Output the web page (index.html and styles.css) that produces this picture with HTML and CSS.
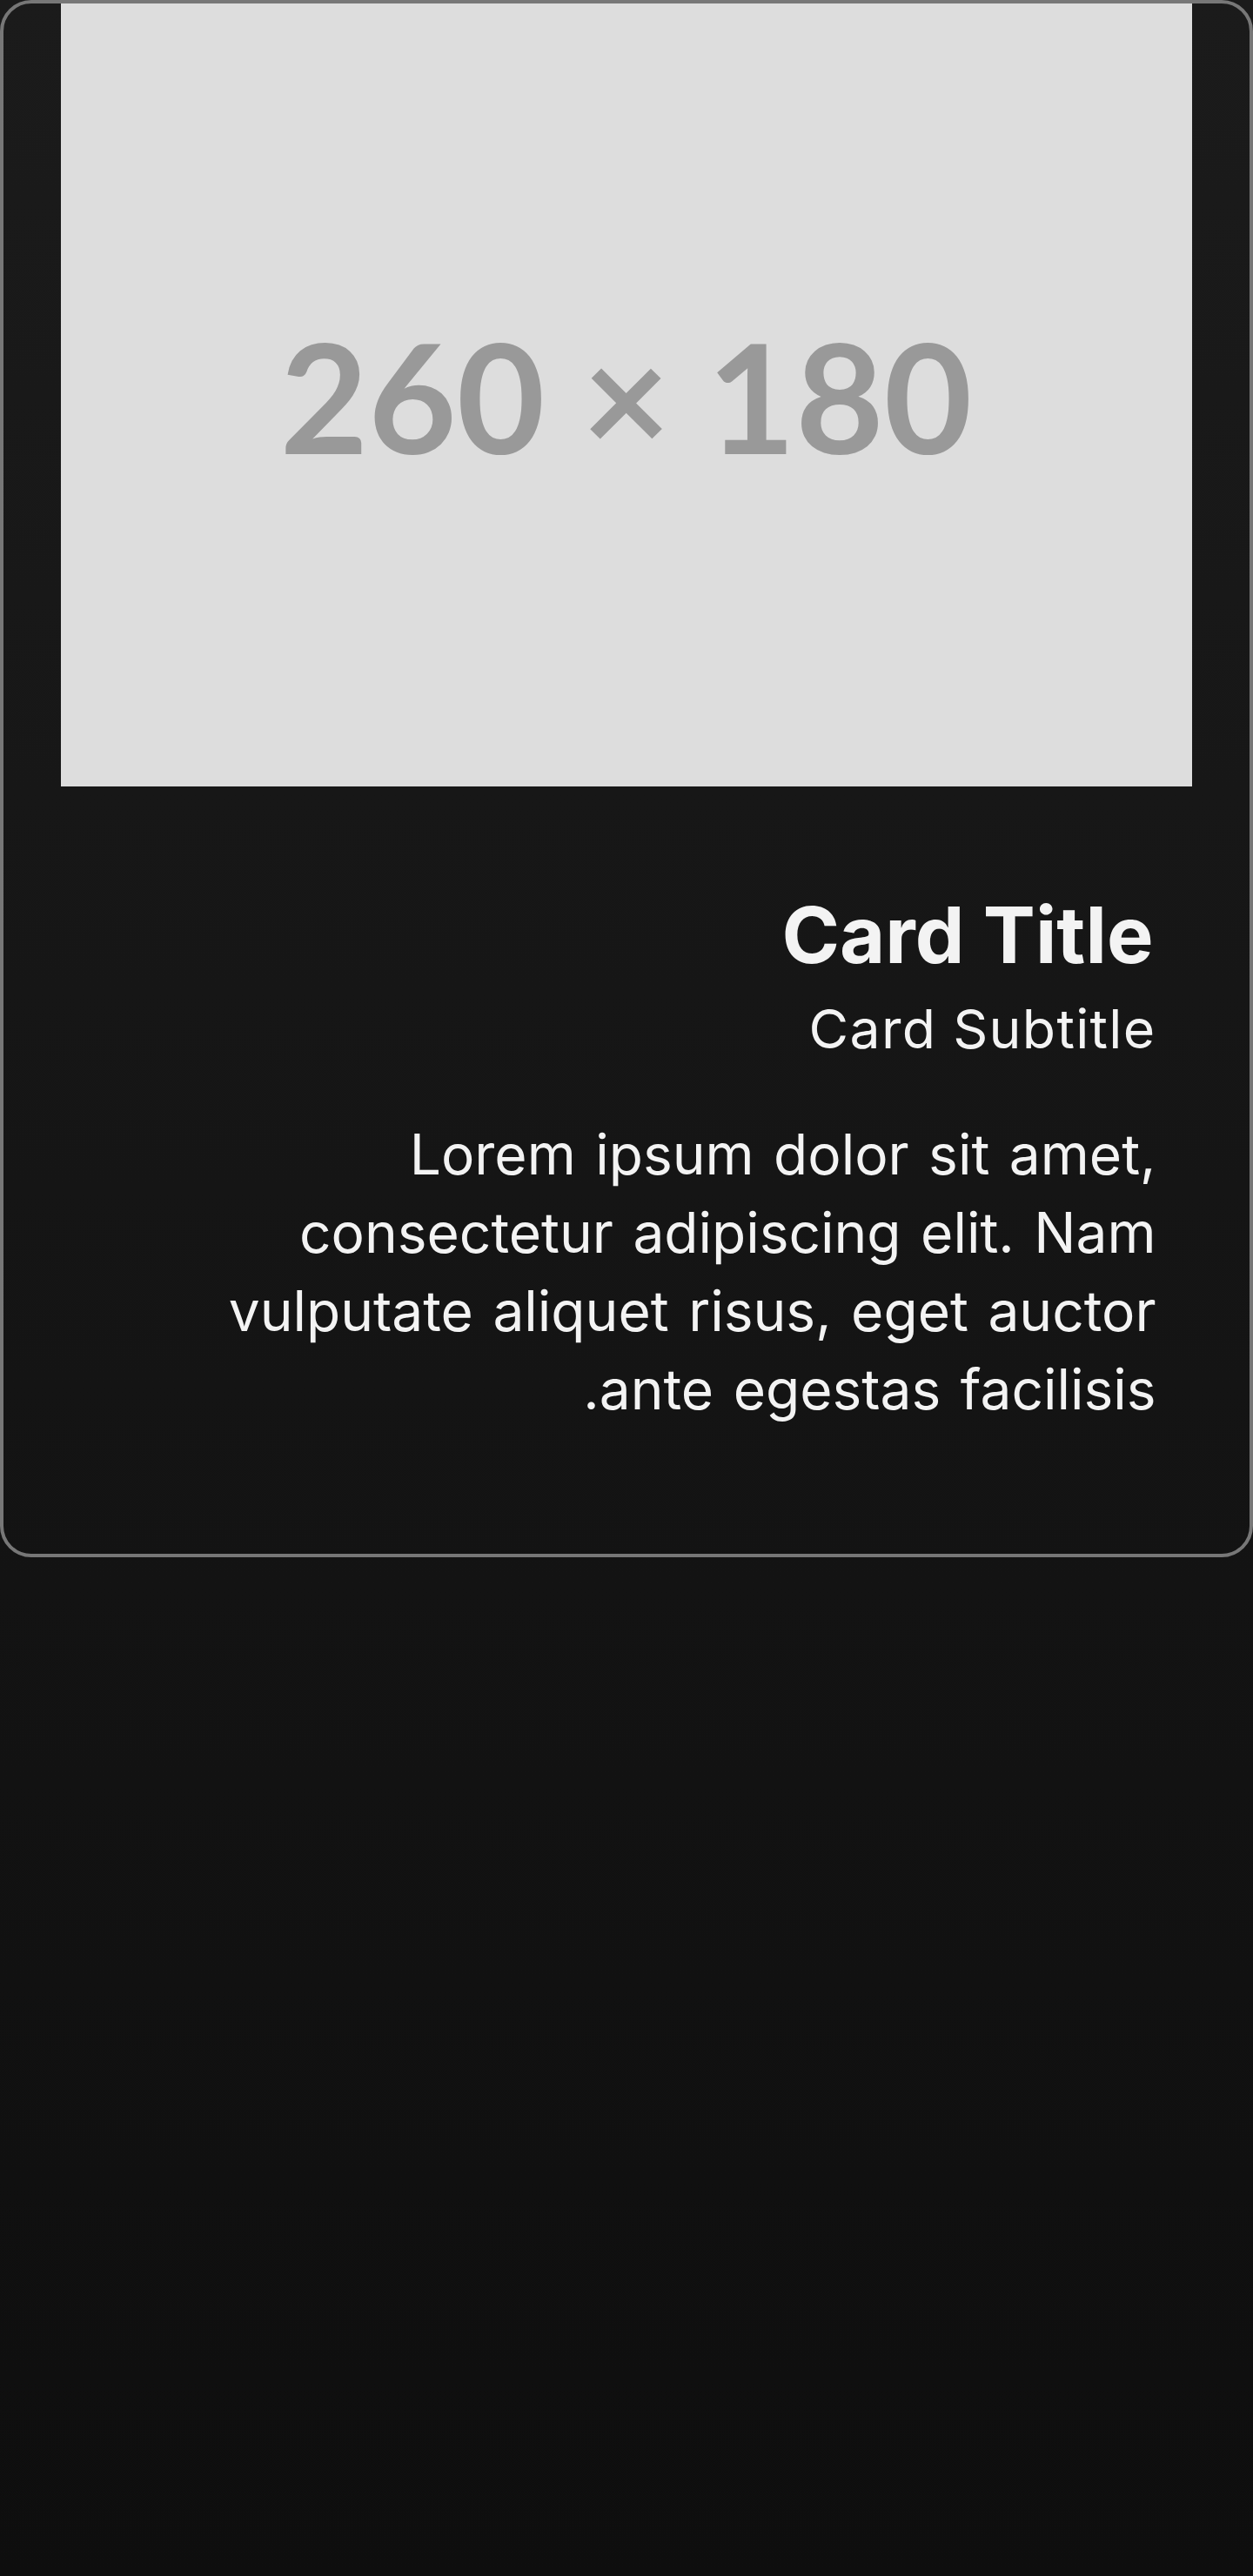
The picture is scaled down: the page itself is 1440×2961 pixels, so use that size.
FILE: index.html
```html
<!DOCTYPE html>
<html lang="en">
<head>
<meta charset="utf-8">
<title>Card</title>
<link rel="stylesheet" href="styles.css">
</head>
<body>
<div class="card">
  <div class="card-img"><span class="img-label">260 × 180</span></div>
  <div class="card-body">
    <h5 class="card-title">Card Title</h5>
    <h6 class="card-subtitle">Card Subtitle</h6>
    <p class="card-text">Lorem ipsum dolor sit amet, consectetur adipiscing elit. Nam vulputate aliquet risus, eget auctor ante egestas facilisis.</p>
  </div>
</div>
</body>
</html>
```
FILE: styles.css
```css
html, body {
  margin: 0;
  padding: 0;
}
body {
  min-height: 2961px;
  background: linear-gradient(to bottom, #1b1b1b 0%, #0e0e0e 100%);
  font-family: Inter, "Noto Sans", sans-serif;
  color: #f3f3f3;
}
.card {
  box-sizing: border-box;
  width: 1440px;
  border: 4.5px solid #777777;
  border-radius: 36px;
  display: flex;
  flex-direction: column;
}
.card-img {
  margin: 0 65.5px;
  width: 1300px;
  height: 900px;
  background: #dddddd;
  display: flex;
  align-items: center;
  justify-content: center;
}
.img-label {
  font-family: Lato, "Open Sans", sans-serif;
  font-weight: 700;
  font-size: 175px;
  line-height: 1;
  color: #999999;
}
.card-body {
  direction: rtl;
  text-align: right;
  padding: 117px 107.5px 144px 130px;
}
.card-title {
  margin: 0 3px 0 0;
  font-size: 90px;
  font-weight: 700;
  line-height: 108px;
}
.card-subtitle {
  margin: 16px 0 0;
  font-size: 62.5px;
  font-weight: 400;
  line-height: 75px;
  letter-spacing: 1.3px;
}
.card-text {
  margin: 62px 0 0;
  font-size: 64px;
  line-height: 90px;
  word-spacing: 4.5px;
}
```
